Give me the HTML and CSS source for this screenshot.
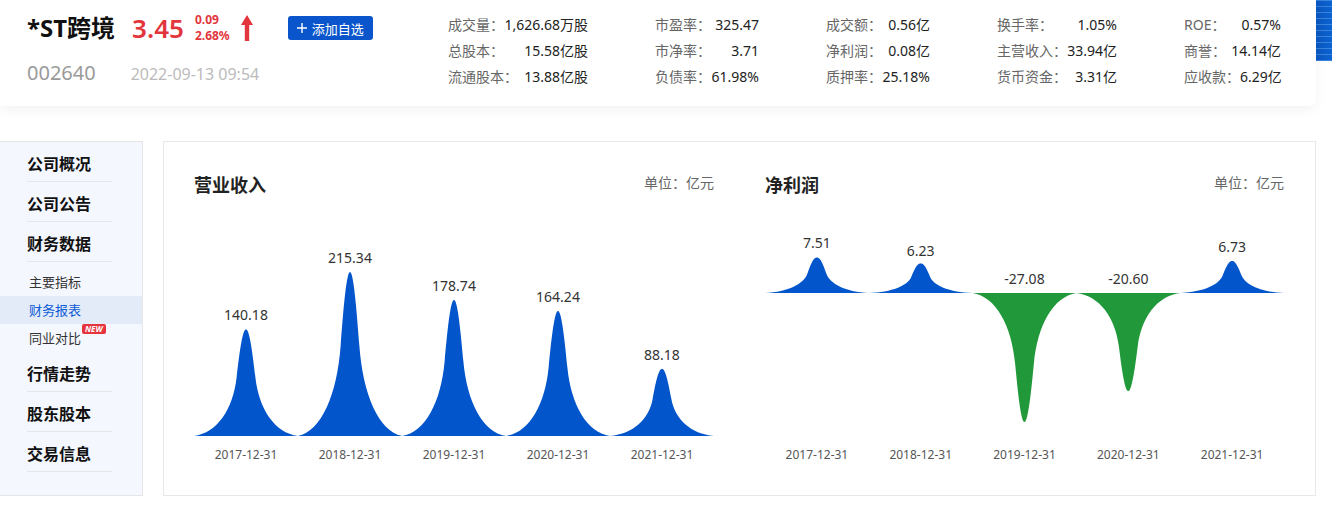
FILE: index.html
```html
<!DOCTYPE html>
<html lang="zh-CN">
<head>
<meta charset="utf-8">
<title>*ST跨境 002640</title>
<link rel="stylesheet" href="styles.css">
</head>
<body>
<header class="quote">
  <div class="quote-main">
    <div class="quote-row">
      <h1 class="stock-name">*ST跨境</h1>
      <span class="price">3.45</span>
      <div class="change"><span>0.09</span><span>2.68%</span></div>
      <svg class="arrow" width="12" height="26" viewBox="0 0 12 26"><path d="M6 0 L12 10 H8.2 V26 H3.8 V10 H0 Z"/></svg>
      <button class="add-btn" type="button"><svg class="plus" width="10" height="10" viewBox="0 0 10 10"><path d="M5 0 V10 M0 5 H10"/></svg>添加自选</button>
    </div>
    <div class="quote-sub">
      <span class="code">002640</span>
      <span class="time">2022-09-13 09:54</span>
    </div>
  </div>
  <div class="stats">
    <div class="stat"><span class="k">成交量：</span><span class="v">1,626.68万股</span></div>
    <div class="stat"><span class="k">市盈率：</span><span class="v">325.47</span></div>
    <div class="stat"><span class="k">成交额：</span><span class="v">0.56亿</span></div>
    <div class="stat"><span class="k">换手率：</span><span class="v">1.05%</span></div>
    <div class="stat"><span class="k">ROE：</span><span class="v">0.57%</span></div>
    <div class="stat"><span class="k">总股本：</span><span class="v">15.58亿股</span></div>
    <div class="stat"><span class="k">市净率：</span><span class="v">3.71</span></div>
    <div class="stat"><span class="k">净利润：</span><span class="v">0.08亿</span></div>
    <div class="stat"><span class="k">主营收入：</span><span class="v">33.94亿</span></div>
    <div class="stat"><span class="k">商誉：</span><span class="v">14.14亿</span></div>
    <div class="stat"><span class="k">流通股本：</span><span class="v">13.88亿股</span></div>
    <div class="stat"><span class="k">负债率：</span><span class="v">61.98%</span></div>
    <div class="stat"><span class="k">质押率：</span><span class="v">25.18%</span></div>
    <div class="stat"><span class="k">货币资金：</span><span class="v">3.31亿</span></div>
    <div class="stat"><span class="k">应收款：</span><span class="v">6.29亿</span></div>
  </div>
</header>

<div class="page">
  <nav class="side">
    <div class="nav-item">公司概况</div>
    <div class="nav-item">公司公告</div>
    <div class="nav-item">财务数据</div>
    <div class="sub-list">
      <div class="sub-item">主要指标</div>
      <div class="sub-item active">财务报表</div>
      <div class="sub-item">同业对比<span class="badge-new">NEW</span></div>
    </div>
    <div class="nav-item">行情走势</div>
    <div class="nav-item">股东股本</div>
    <div class="nav-item">交易信息</div>
  </nav>

  <section class="charts">
    <div class="chart">
      <div class="chart-head"><h2>营业收入</h2><span class="unit">单位：亿元</span></div>
      <svg class="chart-svg" width="520" height="250" viewBox="0 0 520 250">
        <defs>
          <symbol id="peak-up" viewBox="0 0 100 100" preserveAspectRatio="none">
            <path d="M0,100 C22.5,97 37.5,75 41,45 C43.5,24 46.5,0 50,0 C53.5,0 56.5,24 59,45 C62.5,75 77.5,97 100,100 Z"/>
          </symbol>
          <symbol id="peak-down" viewBox="0 0 100 100" preserveAspectRatio="none">
            <path d="M0,0 C22.5,3 37.5,25 41,55 C43.5,76 46.5,100 50,100 C53.5,100 56.5,76 59,55 C62.5,25 77.5,3 100,0 Z"/>
          </symbol>
        </defs>
        <use href="#peak-up" class="bar-up" x="0" y="109.2" width="104" height="106.8"/>
        <use href="#peak-up" class="bar-up" x="104" y="52" width="104" height="164"/>
        <use href="#peak-up" class="bar-up" x="208" y="79.9" width="104" height="136.1"/>
        <use href="#peak-up" class="bar-up" x="312" y="90.9" width="104" height="125.1"/>
        <use href="#peak-up" class="bar-up" x="416" y="148.8" width="104" height="67.2"/>
        <text class="val" x="52" y="100">140.18</text>
        <text class="val" x="156" y="43">215.34</text>
        <text class="val" x="260" y="71">178.74</text>
        <text class="val" x="364" y="82">164.24</text>
        <text class="val" x="468" y="140">88.18</text>
        <text class="axis" x="52" y="239">2017-12-31</text>
        <text class="axis" x="156" y="239">2018-12-31</text>
        <text class="axis" x="260" y="239">2019-12-31</text>
        <text class="axis" x="364" y="239">2020-12-31</text>
        <text class="axis" x="468" y="239">2021-12-31</text>
      </svg>
    </div>
    <div class="chart">
      <div class="chart-head"><h2>净利润</h2><span class="unit">单位：亿元</span></div>
      <svg class="chart-svg" width="519" height="250" viewBox="0 0 519 250">
        <use href="#peak-up" class="bar-up" x="0" y="37.2" width="103.8" height="35.8"/>
        <use href="#peak-up" class="bar-up" x="103.8" y="43.3" width="103.8" height="29.7"/>
        <use href="#peak-down" class="bar-down" x="207.6" y="73" width="103.8" height="129"/>
        <use href="#peak-down" class="bar-down" x="311.4" y="73" width="103.8" height="98.1"/>
        <use href="#peak-up" class="bar-up" x="415.2" y="40.9" width="103.8" height="32.1"/>
        <text class="val" x="51.9" y="28">7.51</text>
        <text class="val" x="155.7" y="36">6.23</text>
        <text class="val" x="259.5" y="64">-27.08</text>
        <text class="val" x="363.3" y="64">-20.60</text>
        <text class="val" x="467.1" y="32">6.73</text>
        <text class="axis" x="51.9" y="239">2017-12-31</text>
        <text class="axis" x="155.7" y="239">2018-12-31</text>
        <text class="axis" x="259.5" y="239">2019-12-31</text>
        <text class="axis" x="363.3" y="239">2020-12-31</text>
        <text class="axis" x="467.1" y="239">2021-12-31</text>
      </svg>
    </div>
  </section>
</div>
</body>
</html>
```

FILE: styles.css
```css
* {
  box-sizing: border-box;
}

body {
  margin: 0;
  font-family: "Noto Sans", "Noto Sans CJK SC", sans-serif;
  color: #333;
  background:
    repeating-linear-gradient(180deg, rgba(140, 200, 255, 0.35) 0 1px, transparent 1px 6px) right top / 16px 61px no-repeat,
    linear-gradient(90deg, #0a56c0, #0c63cf) right top / 16px 61px no-repeat,
    #fff;
}

/* ---------- quote header ---------- */
.quote {
  width: 1316px;
  height: 106px;
  display: flex;
  padding-left: 27px;
  background: #fff;
  border-bottom-right-radius: 6px;
  box-shadow: 0 4px 12px rgba(0, 0, 0, 0.05);
}

.quote-main {
  width: 421px;
  padding-top: 12px;
}

.quote-row {
  display: flex;
  align-items: center;
  height: 32px;
}

.stock-name {
  margin: 0;
  font-size: 24px;
  line-height: 32px;
  font-weight: 700;
  color: #111;
}

.price {
  margin-left: 17px;
  font-size: 26px;
  line-height: 32px;
  font-weight: 600;
  color: #e2363c;
}

.change {
  margin-left: 11px;
  display: flex;
  flex-direction: column;
  font-size: 12px;
  line-height: 16px;
  font-weight: 700;
  color: #e2363c;
}

.arrow {
  margin-left: 11px;
  fill: #e2363c;
}

.add-btn {
  margin-left: 35px;
  width: 85px;
  height: 24px;
  padding: 0;
  border: 0;
  border-radius: 3px;
  background: #0a55cb;
  color: #fff;
  font-family: inherit;
  font-size: 13px;
  display: flex;
  align-items: center;
  justify-content: center;
  gap: 5px;
}

.plus {
  stroke: #fff;
  stroke-width: 1.4;
}

.quote-sub {
  display: flex;
  align-items: baseline;
  margin-top: 17px;
  line-height: 24px;
}

.code {
  font-size: 20px;
  color: #9a9a9a;
}

.time {
  margin-left: 35px;
  font-size: 16px;
  color: #bbb;
}

.stats {
  display: grid;
  grid-template-columns: 140px 104px 104px 120px 97px;
  grid-auto-rows: 26px;
  column-gap: 67px;
  align-content: start;
  margin-top: 11px;
  font-size: 14px;
}

.stat {
  display: flex;
  justify-content: space-between;
  align-items: center;
  white-space: nowrap;
}

.k {
  color: #666;
}

.v {
  color: #222;
}

/* ---------- page body ---------- */
.page {
  display: flex;
  gap: 20px;
  margin-top: 35px;
}

.side {
  width: 143px;
  height: 355px;
  background: #f4f7fe;
  border: 1px solid #e6e6e6;
  border-left: 0;
}

.nav-item {
  margin: 0 30px 0 27px;
  padding: 12px 0 7px;
  line-height: 20px;
  font-size: 16px;
  font-weight: 700;
  color: #111;
  border-bottom: 1px solid #e6e6e6;
}

.sub-list {
  padding-top: 6px;
}

.sub-item {
  height: 28px;
  line-height: 28px;
  padding-left: 29px;
  font-size: 13px;
  color: #333;
}

.sub-item.active {
  background: #e3ebf8;
  color: #0d5bd6;
}

.badge-new {
  display: inline-block;
  vertical-align: top;
  margin-left: 1px;
  height: 10px;
  line-height: 10px;
  padding: 0 3px;
  font-size: 8px;
  font-style: italic;
  font-weight: 700;
  color: #fff;
  background: #e5343d;
  border-radius: 2px;
}

.charts {
  width: 1153px;
  height: 355px;
  border: 1px solid #e8e8e8;
  padding: 31px 31px 25px 30px;
  display: grid;
  grid-template-columns: 520px 519px;
  column-gap: 51px;
  align-content: start;
  background: #fff;
}

.chart-head {
  display: flex;
  justify-content: space-between;
  align-items: center;
  height: 24px;
}

.chart-head h2 {
  margin: 0;
  font-size: 18px;
  line-height: 24px;
  font-weight: 700;
  color: #222;
}

.unit {
  align-self: flex-start;
  line-height: 20px;
  font-size: 14px;
  color: #666;
}

.chart-svg {
  display: block;
  margin-top: 23px;
  overflow: visible;
}

.bar-up {
  fill: #0355cb;
}

.bar-down {
  fill: #21993a;
}

.val {
  font-family: "Noto Sans", "Noto Sans CJK SC", sans-serif;
  font-size: 14px;
  fill: #333;
  text-anchor: middle;
}

.axis {
  font-family: "Noto Sans", "Noto Sans CJK SC", sans-serif;
  font-size: 12px;
  fill: #555;
  text-anchor: middle;
}
```
